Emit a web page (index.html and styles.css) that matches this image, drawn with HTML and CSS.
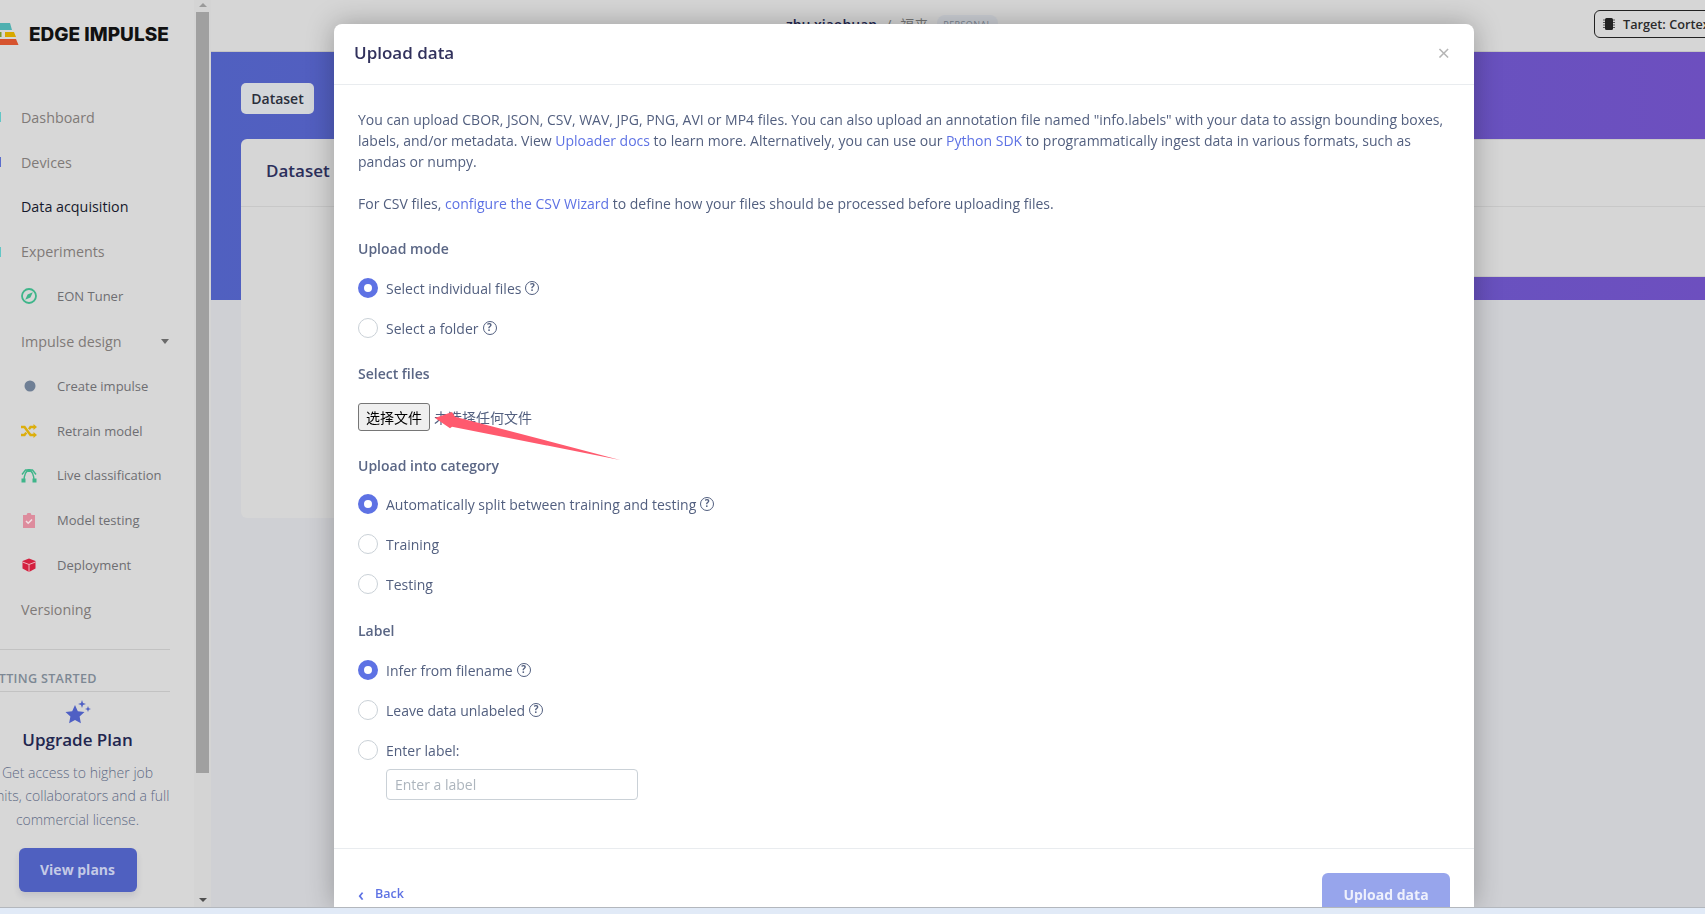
FILE: index.html
```html
<!DOCTYPE html>
<html lang="en">
<head>
<meta charset="utf-8">
<title>Upload data</title>
<link rel="stylesheet" href="styles.css">
</head>
<body>
<div class="app">
  <aside class="sidebar">
    <div class="logo">
      <svg class="logo-mark" viewBox="0 0 19 23" width="19" height="23"><path d="M-4 0h14l2 7H-4z" fill="#4fb0b0"/><path d="M-2 9h3.500v5h-3.500z" fill="#7a9a2c"/><path d="M5 9h9l2 5H5z" fill="#d8a900"/><path d="M-4 16h20l2.500 6H-4z" fill="#d6532e"/></svg>
      <span class="logo-text">EDGE IMPULSE</span>
    </div>
    <nav class="nav">
      <a class="nav-item"><i class="clip clip-teal"></i>Dashboard</a>
      <a class="nav-item"><i class="clip clip-blue"></i>Devices</a>
      <a class="nav-item active">Data acquisition</a>
      <a class="nav-item"><i class="clip clip-teal"></i>Experiments</a>
      <a class="nav-item sub"><svg class="sub-icon" viewBox="0 0 16 16"><circle cx="8" cy="8" r="7" fill="none" stroke="#3fb58a" stroke-width="1.800"/><path d="M11.800 4.200 9.400 9.400 4.200 11.800 6.600 6.600z" fill="#3fb58a"/></svg>EON Tuner</a>
      <a class="nav-item">Impulse design<span class="caret"></span></a>
      <a class="nav-item sub"><svg class="sub-icon" viewBox="0 0 16 16"><circle cx="9" cy="8" r="5.500" fill="#6f7f95"/></svg>Create impulse</a>
      <a class="nav-item sub"><svg class="sub-icon" viewBox="0 0 16 16"><path d="M0 4h3.500l6 8H13M0 12h3.500l1.800-2.400M8 6.200 9.500 4H13" fill="none" stroke="#dcae0c" stroke-width="2.400"/><path d="M12.500 1 16 4l-3.500 3zM12.500 9 16 12l-3.500 3z" fill="#dcae0c"/></svg>Retrain model</a>
      <a class="nav-item sub"><svg class="sub-icon" viewBox="0 0 16 16"><path d="M3 14C3 8 5 3.500 8 3.500S13 8 13 14M1 7.500 4.500 3h7L15 7.500" fill="none" stroke="#3fb58a" stroke-width="1.400"/><rect x="0.500" y="11.500" width="4" height="4" fill="#3fb58a"/><rect x="11.500" y="11.500" width="4" height="4" fill="#3fb58a"/><rect x="6.500" y="2" width="3" height="3" fill="#3fb58a"/></svg>Live classification</a>
      <a class="nav-item sub"><svg class="sub-icon" viewBox="0 0 16 16"><path d="M2 3h3.500l1-2h3l1 2H14v13H2z" fill="#dd8c9d"/><path d="m5 9 2.200 2.200L11 7.500" fill="none" stroke="#f3dfe3" stroke-width="1.600"/></svg>Model testing</a>
      <a class="nav-item sub"><svg class="sub-icon" viewBox="0 0 16 16"><path d="M8 1.500 14.500 4v7.500L8 15 1.500 11.500V4z" fill="#d4203f"/><path d="M1.500 5 8 7.500 14.500 5M8 7.500V15" fill="none" stroke="#efc4cc" stroke-width="0.900"/></svg>Deployment</a>
      <a class="nav-item">Versioning</a>
    </nav>
    <div class="started"><span>GETTING STARTED</span></div>
    <div class="upgrade">
      <svg class="star" viewBox="0 0 26 25" width="26" height="25"><path d="M10 5 12.800 11.200 19.500 12 14.600 16.600 15.900 23.200 10 19.900 4.100 23.200 5.400 16.600.5 12 7.200 11.200z" fill="#4f60c4"/><path d="M17 0l1 3 3 1-3 1-1 3-1-3-3-1 3-1zM23 6l.8 2.200L26 9l-2.200.8L23 12l-.8-2.200L20 9l2.200-.8z" fill="#4f60c4"/></svg>
      <h3 class="upgrade-title">Upgrade Plan</h3>
      <p class="upgrade-copy">Get access to higher job<br>limits, collaborators and a full<br>commercial license.</p>
      <a class="plans-btn">View plans</a>
    </div>
  </aside>
  <div class="scrollbar">
    <span class="arrow-up"></span>
    <span class="thumb"></span>
    <span class="arrow-down"></span>
  </div>
  <main class="main">
    <header class="topbar">
      <div class="crumbs"><b>zhu xiaohuan</b><span>/</span><span class="cjk">福来</span><em>PERSONAL</em></div>
      <div class="target"><svg viewBox="0 0 12 12" width="12" height="12"><path d="M0 2h12M0 4.500h12M0 7h12M0 9.500h12" stroke="#555" stroke-width="1"/><rect x="2" y="0" width="8" height="12" rx="1.500" fill="#222"/></svg>Target: Cortex-M4F 80MHz</div>
    </header>
    <section class="hero">
      <span class="tab">Dataset</span>
    </section>
    <section class="cards">
      <div class="card card-main">
        <h2 class="card-head">Dataset</h2>
      </div>
      <div class="card card-side">
        <div class="card-head"></div>
      </div>
    </section>
  </main>
</div>

<div class="modal">
  <header class="modal-head">
    <h1>Upload data</h1>
    <span class="close">×</span>
  </header>
  <div class="modal-body">
    <p class="copy">You can upload CBOR, JSON, CSV, WAV, JPG, PNG, AVI or MP4 files. You can also upload an annotation file named "info.labels" with your data to assign bounding boxes, labels, and/or metadata. View <a>Uploader docs</a> to learn more. Alternatively, you can use our <a>Python SDK</a> to programmatically ingest data in various formats, such as pandas or numpy.</p>
    <p class="copy">For CSV files, <a>configure the CSV Wizard</a> to define how your files should be processed before uploading files.</p>

    <h4 class="field-title">Upload mode</h4>
    <div class="radio"><i class="dot on"></i>Select individual files<span class="help">?</span></div>
    <div class="radio"><i class="dot"></i>Select a folder<span class="help">?</span></div>

    <h4 class="field-title">Select files</h4>
    <div class="file-row"><button class="file-btn">选择文件</button><span class="file-none">未选择任何文件</span>
      <svg class="pointer" viewBox="0 0 186 50" width="186" height="50"><path d="M0 6 17 0 20 4.700 185 48 17 14.700 15 16.300z" fill="#ff5a6e"/></svg>
    </div>

    <h4 class="field-title">Upload into category</h4>
    <div class="radio"><i class="dot on"></i>Automatically split between training and testing<span class="help">?</span></div>
    <div class="radio"><i class="dot"></i>Training</div>
    <div class="radio"><i class="dot"></i>Testing</div>

    <h4 class="field-title label-title">Label</h4>
    <div class="radio"><i class="dot on"></i>Infer from filename<span class="help">?</span></div>
    <div class="radio"><i class="dot"></i>Leave data unlabeled<span class="help">?</span></div>
    <div class="radio"><i class="dot"></i>Enter label:</div>
    <div class="label-input">Enter a label</div>
  </div>
  <footer class="modal-foot">
    <a class="back"><span class="chev">‹</span>Back</a>
    <a class="upload-btn">Upload data</a>
  </footer>
</div>
<div class="taskbar"></div>
</body>
</html>
```
FILE: styles.css
```css
* { box-sizing: border-box; }
html, body { margin: 0; height: 100%; overflow: hidden; }
body {
  font-family: "Open Sans", "Noto Sans CJK SC", sans-serif;
  font-size: 14px;
  color: #525f7f;
  background: #e1eaf7;
}
h1, h2, h3, h4, p { margin: 0; }
.app { display: flex; height: 907px; background: #cfd0d4; overflow: hidden; }

/* Sidebar */
.sidebar { width: 194px; flex: none; background: #d7d7d7; overflow: hidden; display: flex; flex-direction: column; }
.logo { height: 64px; padding-top: 23px; display: flex; align-items: flex-start; gap: 10px; }
.logo-mark { flex: none; }
.logo-text { font-family: Inter, "Liberation Sans", sans-serif; font-weight: 800; font-size: 19px; line-height: 23px; color: #111; white-space: nowrap; }
.nav { display: flex; flex-direction: column; padding-top: 31px; }
.nav-item { height: 44.750px; display: flex; align-items: center; font-size: 14.300px; color: #7f7a78; padding-left: 21px; position: relative; }
.nav-item.active { color: #16192c; }
.nav-item.sub { font-size: 13px; color: #6e6e72; }
.clip { position: absolute; left: 0; width: 1px; height: 10px; }
.clip-teal { background: #62c6c6; }
.clip-blue { background: #5a6ccc; }
.sub-icon { width: 16px; height: 16px; margin-right: 20px; flex: none; }
.caret { width: 0; height: 0; border-left: 4.500px solid transparent; border-right: 4.500px solid transparent; border-top: 5px solid #6a6a6a; margin-left: 39px; }
.started { margin: 16.500px 24px 0 -18px; border-top: 1px solid #c2c2c2; border-bottom: 1px solid #c2c2c2; height: 43px; display: flex; align-items: flex-end; padding-bottom: 4px; font-size: 12.600px; font-weight: 600; color: #7d8894; letter-spacing: .3px; }
.started span { white-space: nowrap; }
.upgrade { display: flex; flex-direction: column; align-items: center; width: 155px; padding-top: 8px; }
.star { flex: none; }
.upgrade-title { font-size: 17px; font-weight: 600; line-height: 24px; color: #22264f; margin-top: 3px; white-space: nowrap; }
.upgrade-copy { font-size: 14px; font-weight: 300; line-height: 23.500px; color: #5f6b85; text-align: center; white-space: nowrap; margin-top: 9px; flex: none; }
.plans-btn { width: 118px; height: 44px; margin-top: 16.500px; border-radius: 6px; background: #4f60c0; color: #c4cae6; font-weight: 700; font-size: 14px; display: flex; align-items: center; justify-content: center; box-shadow: 0 4px 6px rgba(50,50,93,.12); flex: none; }

/* Scrollbar */
.scrollbar { width: 17px; flex: none; background: #d4d4d4; display: flex; flex-direction: column; align-items: center; padding: 3px 0 5px 0; }
.thumb { width: 13px; height: 761px; margin: 5px 0 auto; background: #a0a0a0; }
.arrow-up { width: 0; height: 0; border-left: 4px solid transparent; border-right: 4px solid transparent; border-bottom: 4px solid #9a9a9a; }
.arrow-down { width: 0; height: 0; border-left: 4px solid transparent; border-right: 4px solid transparent; border-top: 4px solid #505050; }

/* Page behind the modal */
.main { flex: 1; min-width: 0; display: flex; flex-direction: column; overflow: hidden; }
.topbar { height: 52px; flex: none; background: #d6d6d6; border-bottom: 1px solid #c4c4c4; display: flex; align-items: flex-start; position: relative; }
.crumbs { display: flex; align-items: center; gap: 9px; margin-left: 575px; padding-top: 15px; font-size: 14px; line-height: 20px; color: #777; white-space: nowrap; }
.crumbs b { font-weight: 600; color: #22264f; }
.crumbs em { font-style: normal; font-size: 9px; height: 20px; padding: 0 6px; border-radius: 8px; background: #cbced4; color: #7d8894; letter-spacing: .4px; }
.target { position: absolute; left: 1383px; top: 10px; height: 28px; width: 300px; padding-left: 8px; border: 1px solid #222; border-radius: 6px; display: flex; align-items: center; gap: 8px; color: #2a2a2a; font-size: 12.700px; font-weight: 600; white-space: nowrap; }
.hero { height: 248px; flex: none; padding: 31px 30px; background: linear-gradient(90deg, #5060c0 0%, #6d4fbf 100%); }
.tab { display: inline-flex; align-items: center; justify-content: center; width: 73px; height: 31px; border-radius: 5px; background: #d3d6da; color: #2a2e3a; font-weight: 600; font-size: 14px; }
.cards { display: flex; align-items: flex-start; margin: -161px 0 0 30px; flex: none; position: relative; }
.card { background: #d6d6d6; border-radius: 6px 0 0 6px; }
.card-main { width: 640px; height: 379px; flex: none; }
.card-side { flex: 1; height: 138px; border-radius: 0; border-top: 1px solid #c9c9c9; border-bottom: 1px solid #c9c9c9; }
.card-head { height: 68px; padding: 20px 25px 0; font-size: 17px; line-height: 24px; font-weight: 600; color: #2c2f5b; border-bottom: 1px solid #c8c8c8; }
.card-side .card-head { height: 67px; }

/* Modal */
.modal { position: fixed; left: 334px; top: 24px; width: 1140px; height: 883px; background: #fff; border-radius: 8px 8px 0 0; box-shadow: 0 0 28px rgba(0,0,0,.28); display: flex; flex-direction: column; overflow: hidden; }
.modal-head { height: 61px; flex: none; display: flex; align-items: center; justify-content: space-between; padding: 0 24px 4px 20px; border-bottom: 1px solid #e9ecef; }
.modal-head h1 { font-size: 17px; font-weight: 600; color: #32325d; }
.close { font-size: 22px; color: #b5b5b5; line-height: 1; }
.modal-body { flex: 1; padding: 24px 24px 0; }
.copy { line-height: 21px; width: 1092px; margin-bottom: 21px; }
.copy a { color: #5e72e4; }
.field-title { font-size: 14px; font-weight: 600; line-height: 21px; color: #5a6685; margin: 25px 0 18px; }
.copy + .field-title { margin: 24px 0 19px; }
.file-row + .field-title { margin-top: 24px; }
.field-title.label-title { margin: 26px 0 19px; }
.radio { height: 20px; margin-bottom: 20px; display: flex; align-items: center; }
.dot { width: 20px; height: 20px; border-radius: 50%; border: 1px solid #cad1d7; background: #fff; margin-right: 8px; flex: none; }
.dot.on { border: 6.500px solid #5e72e4; }
.help { width: 14px; height: 14px; margin-left: 4px; border: 1.500px solid #525f7f; border-radius: 50%; font-size: 10px; font-weight: 700; line-height: 11px; text-align: center; }
.file-row { position: relative; height: 28px; display: flex; align-items: center; margin: 19px 0 24px; }
.file-btn { width: 72px; height: 28px; padding: 0; border: 1px solid #767676; border-radius: 3px; background: #efefef; color: #000; font-family: "Noto Sans CJK SC", sans-serif; font-size: 14px; }
.file-none { margin-left: 4px; font-family: "Noto Sans CJK SC", sans-serif; font-size: 14px; color: #525f7f; }
.pointer { position: absolute; left: 77px; top: 9px; }
.label-input { width: 252px; height: 31px; margin: -11px 0 0 28px; padding-left: 8px; border: 1px solid #cad1d7; border-radius: 4px; color: #adb5bd; line-height: 29px; }
.modal-foot { height: 59px; flex: none; border-top: 1px solid #e9ecef; padding: 24px 24px 0; display: flex; justify-content: space-between; align-items: flex-start; overflow: hidden; }
.back { display: flex; align-items: center; color: #5e72e4; font-size: 12.500px; font-weight: 600; margin-top: 12px; }
.chev { width: 17px; font-size: 18px; line-height: 14px; }
.upload-btn { width: 128px; height: 43px; flex: none; background: #97a5ec; color: #eef0fc; font-weight: 700; border-radius: 6px; display: flex; align-items: center; justify-content: center; font-size: 14px; }
.taskbar { position: fixed; left: 0; right: 0; top: 907px; height: 7px; background: #e1eaf7; border-top: 1px solid #b3b7bd; }
```
